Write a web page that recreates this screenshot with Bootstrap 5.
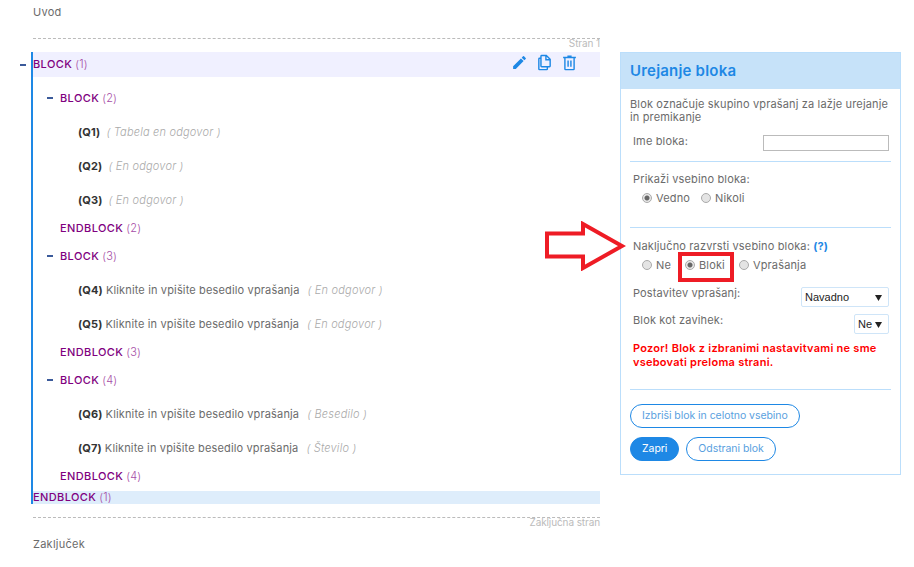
<!DOCTYPE html>
<html lang="sl">
  <head>
    <meta charset="UTF-8" />
    <meta name="viewport" content="width=device-width, initial-scale=1.0" />
    <title>Urejanje bloka</title>
    <link rel="stylesheet" href="https://cdn.jsdelivr.net/npm/bootstrap@5.3.5/dist/css/bootstrap.min.css" />
    <script src="https://cdn.jsdelivr.net/npm/bootstrap@5.3.5/dist/js/bootstrap.bundle.min.js"></script>
    <style>
      body { font-family: Inter, "Open Sans", sans-serif; font-size: 11px; color: #6b6b6b; letter-spacing: .15px; background: #fff; }
      .page-wrap { position: relative; width: 914px; height: 567px; overflow: hidden; }
      .survey-col { width: 567px; margin-left: 33px; flex: none; }
      .intro-row { height: 38px; padding-top: 5px; line-height: 14px; letter-spacing: .25px; }
      .page-break { border-top: 1px dashed #bbb; height: 14px; color: #bbb; font-size: 10px; line-height: 8px; text-align: right; letter-spacing: -.1px; }
      .tree { margin-left: -2px; border-left: 2px solid #1e88e5; }
      .band-open { height: 25px; background: #f0f0ff; padding-right: 22px; }
      .band-close { height: 13px; background: #deedfb; margin-top: 4px; line-height: 12px; }
      .tree-body { padding-top: 4px; }
      .tree-row { height: 34px; }
      .tree-end { height: 22px; padding-left: 27px; }
      .lvl-2 { padding-left: 14px; }
      .q-row { padding-left: 45px; }
      .toggle { width: 6px; height: 2px; background: #3b5a9a; flex: none; margin-right: 7px; }
      .toggle-out { margin-left: -13px; }
      .kw { color: #800080; font-weight: 500; letter-spacing: .4px; }
      .kw-num { color: #a64ca6; font-weight: 300; margin-left: 3px; }
      .q-id { color: #333; font-weight: 700; margin-right: 3px; }
      .q-type { color: #aaa; font-style: italic; font-weight: 300; margin-left: 3px; letter-spacing: .2px; }
      .tool-group { margin-top: -5px; }
      .tool-icon { width: 17px; height: 17px; fill: #1e88e5; flex: none; }
      .panel-card { width: 281px; margin: 52px 0 0 20px; flex: none; height: 423px; border: 1px solid #bbdefb; border-radius: 0; }
      .panel-head { height: 36px; background: #c6e2f9; border: 0; border-radius: 0 !important; padding: 0 9px; color: #1e88e5; font-size: 15px; font-weight: 600; line-height: 36px; letter-spacing: .2px; }
      .panel-body { padding: 9px 9px 0; line-height: 14px; }
      .panel-intro { line-height: 13px; }
      .panel-rule { border: 0; border-top: 1px solid #bbdefb; opacity: 1; margin: 0; width: 261px; }
      .field-label { padding-left: 3px; }
      .name-label { padding-bottom: 3px; }
      .name-input { width: 126px; height: 16px; border: 1px solid #bbb; border-radius: 0; padding: 0; margin-right: 2px; }
      .name-row { margin-top: 9px; height: 19px; margin-bottom: 9px; }
      .after-rule { margin-top: 10px; }
      .after-rule-wide { margin-top: 11px; }
      .radio-row { padding-left: 12px; height: 14px; margin-top: 5px; }
      .radio-tight { gap: 11px; }
      .radio-loose { gap: 14px; }
      .radio-opt { gap: 4px; }
      .fake-radio { appearance: none; width: 10px; height: 10px; margin: 0; border: 1px solid #aaa; border-radius: 50%; background: #e4e4e4; flex: none; }
      .fake-radio:checked { background: radial-gradient(circle, #666 0 2px, #e8e8e8 3px); }
      .rule-gap { margin-top: 22px; }
      .layout-row { margin-top: 14px; }
      .tab-row { margin-top: 6px; }
      .pick { height: 20px; margin-top: 1px; border: 1px solid #cfe5f8; border-radius: 2px; background: #fff url("data:image/svg+xml,%3Csvg xmlns='http://www.w3.org/2000/svg' width='7' height='7'%3E%3Cpath d='M0 1h7L3.500 7z' fill='%23222'/%3E%3C/svg%3E") no-repeat right 6px center; appearance: none; font-family: "Liberation Sans", Arial, sans-serif; font-size: 11px; color: #222; padding: 0 0 0 3px; margin-right: 2px; letter-spacing: 0; }
      .pick-wide { width: 88px; }
      .pick-small { width: 35px; }
      .warn-text { color: #f00; font-weight: 600; padding-left: 3px; line-height: 14px; margin-top: 7px; letter-spacing: .25px; }
      .warn-rule { margin-top: 20px; }
      .help-mark { color: #1e88e5; font-weight: 700; }
      .first-btn-row { margin-top: 14px; }
      .second-btn-row { margin-top: 9px; gap: 7px; }
      .pill-btn { height: 24px; padding: 0 11px; font-size: 10.5px; line-height: 22px; border: 1px solid #1e88e5; color: #5a9fe0; background: #fff; border-radius: 12px; letter-spacing: -.05px; font-weight: 400; }
      .pill-solid { background: #1e88e5; color: #fff; }
      .closing-text { padding-top: 5px; letter-spacing: .25px; }
      .closing-break { margin-top: 13px; }
      .mark-arrow { position: absolute; left: 544px; top: 221px; }
      .mark-box { position: absolute; left: 678px; top: 252px; width: 56px; height: 30px; border: 4px solid #ee1c25; }
    </style>
  </head>
  <body>
    <div class="page-wrap d-flex align-items-start">
      <div class="survey-col">
        <div class="intro-row">Uvod</div>
        <div class="page-break">Stran 1</div>
        <div class="tree">
          <div class="band-open d-flex align-items-center">
            <span class="toggle toggle-out"></span>
            <span class="kw">BLOCK</span><span class="kw-num">(1)</span>
            <div class="tool-group d-flex gap-2 ms-auto">
              <svg class="tool-icon" viewBox="0 0 24 24"><path d="M3 17.250V21h3.750L17.810 9.940l-3.750-3.750L3 17.250zM20.710 7.040a1 1 0 0 0 0-1.410l-2.340-2.340a1 1 0 0 0-1.410 0l-1.830 1.830 3.750 3.750 1.830-1.830z"/></svg>
              <svg class="tool-icon" viewBox="0 0 24 24"><path d="M15 1H8a2 2 0 0 0-2 2v2H5a2 2 0 0 0-2 2v14a2 2 0 0 0 2 2h10a2 2 0 0 0 2-2v-2h2a2 2 0 0 0 2-2V7zm0 2.800L18.200 7H15zM15 21H5V7h1v10a2 2 0 0 0 2 2h7zm4-4H8V3h5v6h6z"/></svg>
              <svg class="tool-icon" viewBox="0 0 24 24"><path d="M9 2v2H3v2h1.500v15a2 2 0 0 0 2 2h11a2 2 0 0 0 2-2V6H21V4h-6V2zm-2.500 4h11v15h-11zM9 9v9h2V9zm4 0v9h2V9z"/></svg>
            </div>
          </div>
          <div class="tree-body">
            <div class="tree-row lvl-2 d-flex align-items-center"><span class="toggle"></span><span class="kw">BLOCK</span><span class="kw-num">(2)</span></div>
            <div class="tree-row q-row d-flex align-items-center"><span class="q-id">(Q1)</span><span class="q-type">( Tabela en odgovor )</span></div>
            <div class="tree-row q-row d-flex align-items-center"><span class="q-id">(Q2)</span><span class="q-type">( En odgovor )</span></div>
            <div class="tree-row q-row d-flex align-items-center"><span class="q-id">(Q3)</span><span class="q-type">( En odgovor )</span></div>
            <div class="tree-end d-flex align-items-center"><span class="kw">ENDBLOCK</span><span class="kw-num">(2)</span></div>
            <div class="tree-row lvl-2 d-flex align-items-center"><span class="toggle"></span><span class="kw">BLOCK</span><span class="kw-num">(3)</span></div>
            <div class="tree-row q-row d-flex align-items-center"><span class="q-id">(Q4)</span><span>Kliknite in vpišite besedilo vprašanja</span><span class="q-type ms-2">( En odgovor )</span></div>
            <div class="tree-row q-row d-flex align-items-center"><span class="q-id">(Q5)</span><span>Kliknite in vpišite besedilo vprašanja</span><span class="q-type ms-2">( En odgovor )</span></div>
            <div class="tree-end d-flex align-items-center"><span class="kw">ENDBLOCK</span><span class="kw-num">(3)</span></div>
            <div class="tree-row lvl-2 d-flex align-items-center"><span class="toggle"></span><span class="kw">BLOCK</span><span class="kw-num">(4)</span></div>
            <div class="tree-row q-row d-flex align-items-center"><span class="q-id">(Q6)</span><span>Kliknite in vpišite besedilo vprašanja</span><span class="q-type ms-2">( Besedilo )</span></div>
            <div class="tree-row q-row d-flex align-items-center"><span class="q-id">(Q7)</span><span>Kliknite in vpišite besedilo vprašanja</span><span class="q-type ms-2">( Število )</span></div>
            <div class="tree-end d-flex align-items-center"><span class="kw">ENDBLOCK</span><span class="kw-num">(4)</span></div>
          </div>
          <div class="band-close"><span class="kw">ENDBLOCK</span><span class="kw-num">(1)</span></div>
        </div>
        <div class="page-break closing-break">Zaključna stran</div>
        <div class="closing-text">Zaključek</div>
      </div>

      <div class="card panel-card">
        <div class="card-header panel-head">Urejanje bloka</div>
        <div class="card-body panel-body">
          <div class="panel-intro">Blok označuje skupino vprašanj za lažje urejanje in premikanje</div>
          <div class="name-row d-flex justify-content-between align-items-center">
            <span class="field-label name-label">Ime bloka:</span>
            <input class="name-input" type="text" />
          </div>
          <hr class="panel-rule" />
          <div class="field-label after-rule">Prikaži vsebino bloka:</div>
          <div class="radio-row radio-tight d-flex align-items-center">
            <label class="radio-opt d-flex align-items-center"><input class="fake-radio" type="radio" name="show" checked />Vedno</label>
            <label class="radio-opt d-flex align-items-center"><input class="fake-radio" type="radio" name="show" />Nikoli</label>
          </div>
          <hr class="panel-rule rule-gap" />
          <div class="field-label after-rule-wide">Naključno razvrsti vsebino bloka: <span class="help-mark">(?)</span></div>
          <div class="radio-row radio-loose d-flex align-items-center">
            <label class="radio-opt d-flex align-items-center"><input class="fake-radio" type="radio" name="rnd" />Ne</label>
            <label class="radio-opt d-flex align-items-center"><input class="fake-radio" type="radio" name="rnd" checked />Bloki</label>
            <label class="radio-opt d-flex align-items-center"><input class="fake-radio" type="radio" name="rnd" />Vprašanja</label>
          </div>
          <div class="layout-row d-flex justify-content-between align-items-start">
            <span class="field-label">Postavitev vprašanj:</span>
            <select class="pick pick-wide"><option>Navadno</option></select>
          </div>
          <div class="tab-row d-flex justify-content-between align-items-start">
            <span class="field-label">Blok kot zavihek:</span>
            <select class="pick pick-small"><option>Ne</option></select>
          </div>
          <div class="warn-text">Pozor! Blok z izbranimi nastavitvami ne sme vsebovati preloma strani.</div>
          <hr class="panel-rule warn-rule" />
          <div class="first-btn-row d-flex"><button class="btn pill-btn" type="button">Izbriši blok in celotno vsebino</button></div>
          <div class="second-btn-row d-flex"><button class="btn pill-btn pill-solid" type="button">Zapri</button><button class="btn pill-btn" type="button">Odstrani blok</button></div>
        </div>
      </div>

      <svg class="mark-arrow" width="82" height="50" viewBox="0 0 82 50"><path d="M3 12.500h36V3l39 22-39 22V35.500H3z" fill="#fff" stroke="#ee1c25" stroke-width="4" /></svg>
      <div class="mark-box"></div>
    </div>
  </body>
</html>
